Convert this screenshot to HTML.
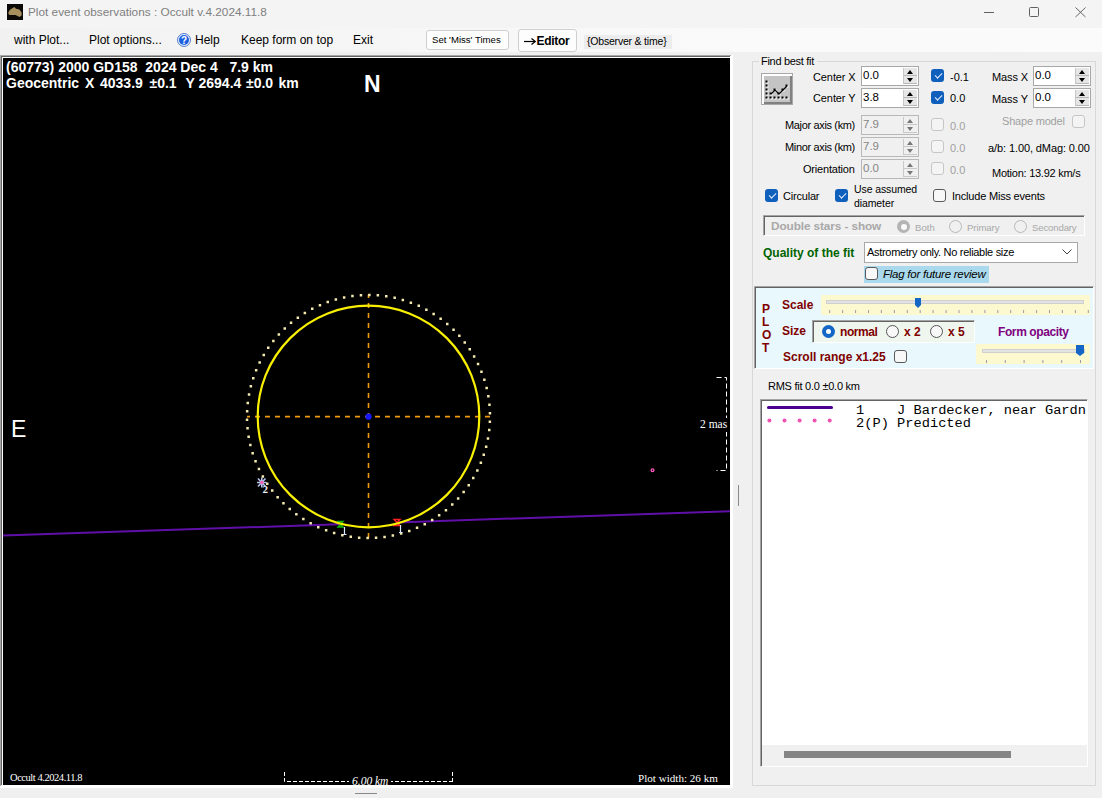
<!DOCTYPE html>
<html><head><meta charset="utf-8">
<style>
*{box-sizing:border-box}
html,body{margin:0;padding:0}
body{width:1102px;height:798px;position:relative;overflow:hidden;background:#f0f0f0;font-family:"Liberation Sans",sans-serif;font-size:11px;color:#000}
.a{position:absolute;white-space:pre;line-height:1}
.wt{color:#fff;font-weight:bold;font-size:14px}
.chk{position:absolute;width:13px;height:13px;border-radius:3px;background:#0f5fbd}
.chk::after{content:"";position:absolute;left:3.5px;top:3.5px;width:5.5px;height:2.5px;border-left:1px solid #e8f0ff;border-bottom:1px solid #e8f0ff;transform:rotate(-45deg)}
.uchk{position:absolute;width:13px;height:13px;border-radius:3px;border:1px solid #5a5a5a;background:#f8f8f8}
.dchk{position:absolute;width:13px;height:13px;border-radius:3px;border:1px solid #c6c6c6;background:#f4f4f4}
.tb{position:absolute;width:58px;height:20px;border:1px solid #a8a8a8;background:#fff}
.tb.dis{background:#f0f0f0;border-color:#b8b8b8}
.tb .t{position:absolute;left:1px;top:2.5px;font-size:11.5px}
.tb.dis .t{color:#858585}
.sp{position:absolute;left:41px;top:1px;width:14px;height:16px}
.sp i{position:absolute;left:0;width:14px;height:7.5px;background:#e6e6e6;border-bottom:1px solid #b8b8b8;border-left:1px solid #c8c8c8}
.sp i:nth-child(1){top:0}
.sp i:nth-child(2){top:8px}
.sp b{position:absolute;left:4px;width:0;height:0;border-left:3.5px solid transparent;border-right:3.5px solid transparent}
.sp b.u{top:2px;border-bottom:4px solid #000}
.sp b.d{top:10px;border-top:4px solid #000}
.dis .sp i{background:#f0f0f0;border-color:#c8c8c8}
.dis .sp b.u{border-bottom-color:#777}
.dis .sp b.d{border-top-color:#777}
.rad{position:absolute;width:13px;height:13px;border-radius:50%;border:1px solid #555;background:#f8f8f8}
.mar{color:#800000;font-weight:bold}
</style></head><body>
<div class="a" style="left:0;top:0;width:1102px;height:28px;background:#f4f4f4"></div>
<div class="a" style="left:0;top:28px;width:1102px;height:24px;background:linear-gradient(to right,#f1f1f1 0%,#f5f5f5 28%,#f9f9f9 60%,#fbfbfb 100%)"></div>
<svg class="a" style="left:7px;top:4px" width="16" height="16"><rect width="16" height="16" fill="#0c0a08"/><path d="M1.3 9.5C1.5 7 3 5.5 5 4.5L7.3 3L9 4.8L12.3 5.5L14.6 8.5L14.6 11.5L12.5 13L8.5 11L2.5 11Z" fill="#a8905e"/></svg>
<div class="a" style="left:28px;top:6.5px;color:#808080;font-size:11.8px">Plot event observations : Occult v.4.2024.11.8</div>
<div class="a" style="left:984px;top:12px;width:10px;height:1px;background:#606060"></div>
<div class="a" style="left:1029px;top:7px;width:10px;height:10px;border:1px solid #606060;border-radius:1.5px"></div>
<svg class="a" style="left:1074.5px;top:7px" width="11" height="11"><path d="M0.5 0.5L10.5 10M10.5 0.5L0.5 10" stroke="#666" stroke-width="1"/></svg>
<div class="a" style="left:14px;top:34px;font-size:12px">with Plot...</div>
<div class="a" style="left:89px;top:34px;font-size:12px">Plot options...</div>
<div class="a" style="left:195px;top:34px;font-size:12px">Help</div>
<div class="a" style="left:241px;top:34px;font-size:12px">Keep form on top</div>
<div class="a" style="left:353px;top:34px;font-size:12px">Exit</div>
<svg class="a" style="left:177px;top:33px" width="14" height="14"><circle cx="7" cy="7" r="6.5" fill="#e4ecfa" stroke="#4a74c8" stroke-width="0.9"/><circle cx="7" cy="7" r="5" fill="#1b5fe0"/><text x="7" y="10.8" font-size="10" font-weight="bold" text-anchor="middle" fill="#fff" font-family="Liberation Sans">?</text></svg>
<div class="a" style="left:426px;top:30px;width:83px;height:20px;border:1px solid #cfcfcf;border-radius:3px;background:#fdfdfd"></div>
<div class="a" style="left:432px;top:35px;font-size:9.6px">Set 'Miss' Times</div>
<div class="a" style="left:518px;top:29px;width:59px;height:23px;border:1px solid #cfcfcf;border-radius:3px;background:#fdfdfd"></div>
<svg class="a" style="left:524px;top:37px" width="13" height="9"><path d="M0 4.5H11" stroke="#000" stroke-width="1.2"/><path d="M7.5 1.5L11.3 4.5L7.5 7.5" fill="none" stroke="#000" stroke-width="1.2"/></svg>
<div class="a" style="left:536.5px;top:34.8px;font-size:12px;font-weight:bold;letter-spacing:-0.3px">Editor</div>
<div class="a" style="left:584px;top:35px;width:88px;height:14px;background:#ececec"></div>
<div class="a" style="left:587px;top:36px;font-size:10.5px;letter-spacing:-0.2px">{Observer &amp; time}</div>
<div class="a" style="left:0;top:55px;width:733px;height:733px;background:#fff"></div>
<div class="a" style="left:0;top:55px;width:731px;height:1px;background:#a8a8a8"></div>
<div class="a" style="left:0;top:55px;width:1px;height:731px;background:#a8a8a8"></div>
<div class="a" style="left:1px;top:56px;width:729px;height:1px;background:#646464"></div>
<div class="a" style="left:1px;top:56px;width:1px;height:729px;background:#646464"></div>
<div class="a" style="left:3px;top:58px;width:727px;height:727px;background:#000"></div>
<svg class="a" style="left:0;top:0" width="1102" height="798" viewBox="0 0 1102 798"><defs><clipPath id="pc"><rect x="3" y="58" width="727" height="727"/></clipPath></defs><g clip-path="url(#pc)"><line x1="3" y1="535.5" x2="339" y2="524.3" stroke="#6010a8" stroke-width="2"/><line x1="397" y1="522.4" x2="730" y2="511.2" stroke="#6010a8" stroke-width="2"/><line x1="247" y1="416.6" x2="491" y2="416.6" stroke="#f09a10" stroke-width="1.6" stroke-dasharray="5 5" stroke-dashoffset="2"/><line x1="368.5" y1="294.5" x2="368.5" y2="538.5" stroke="#f09a10" stroke-width="1.6" stroke-dasharray="5 5" stroke-dashoffset="1.6"/><path d="M338 521.5H343L338 527H343Z" fill="none" stroke="#10b010" stroke-width="1.4"/><path d="M394 519.5H400L394 525.5H400Z" fill="none" stroke="#ff2020" stroke-width="1.4"/><circle cx="368.5" cy="416.5" r="110.8" fill="none" stroke="#f8f000" stroke-width="2.2"/><path d="M366.4 536.7h2.5v2.5h-2.5zM357.9 536.4h2.5v2.5h-2.5zM349.5 535.4h2.5v2.5h-2.5zM341.1 533.9h2.5v2.5h-2.5zM332.9 531.8h2.5v2.5h-2.5zM324.9 529.1h2.5v2.5h-2.5zM317.0 525.9h2.5v2.5h-2.5zM309.4 522.1h2.5v2.5h-2.5zM302.1 517.8h2.5v2.5h-2.5zM295.1 513.0h2.5v2.5h-2.5zM288.5 507.7h2.5v2.5h-2.5zM282.2 502.0h2.5v2.5h-2.5zM276.4 495.9h2.5v2.5h-2.5zM271.0 489.3h2.5v2.5h-2.5zM266.0 482.4h2.5v2.5h-2.5zM261.6 475.2h2.5v2.5h-2.5zM257.7 467.7h2.5v2.5h-2.5zM254.3 459.9h2.5v2.5h-2.5zM251.4 451.9h2.5v2.5h-2.5zM249.1 443.8h2.5v2.5h-2.5zM247.4 435.5h2.5v2.5h-2.5zM246.3 427.1h2.5v2.5h-2.5zM245.8 418.6h2.5v2.5h-2.5zM245.9 410.1h2.5v2.5h-2.5zM246.5 401.7h2.5v2.5h-2.5zM247.8 393.3h2.5v2.5h-2.5zM249.6 385.0h2.5v2.5h-2.5zM252.0 376.9h2.5v2.5h-2.5zM254.9 368.9h2.5v2.5h-2.5zM258.4 361.2h2.5v2.5h-2.5zM262.5 353.7h2.5v2.5h-2.5zM267.0 346.6h2.5v2.5h-2.5zM272.1 339.7h2.5v2.5h-2.5zM277.6 333.3h2.5v2.5h-2.5zM283.5 327.2h2.5v2.5h-2.5zM289.8 321.6h2.5v2.5h-2.5zM296.6 316.4h2.5v2.5h-2.5zM303.6 311.7h2.5v2.5h-2.5zM311.0 307.6h2.5v2.5h-2.5zM318.7 303.9h2.5v2.5h-2.5zM326.5 300.8h2.5v2.5h-2.5zM334.6 298.2h2.5v2.5h-2.5zM342.9 296.2h2.5v2.5h-2.5zM351.2 294.8h2.5v2.5h-2.5zM359.7 294.0h2.5v2.5h-2.5zM368.1 293.8h2.5v2.5h-2.5zM376.6 294.1h2.5v2.5h-2.5zM385.0 295.1h2.5v2.5h-2.5zM393.4 296.6h2.5v2.5h-2.5zM401.6 298.7h2.5v2.5h-2.5zM409.6 301.4h2.5v2.5h-2.5zM417.5 304.6h2.5v2.5h-2.5zM425.1 308.4h2.5v2.5h-2.5zM432.4 312.7h2.5v2.5h-2.5zM439.4 317.5h2.5v2.5h-2.5zM446.0 322.8h2.5v2.5h-2.5zM452.3 328.5h2.5v2.5h-2.5zM458.1 334.6h2.5v2.5h-2.5zM463.5 341.2h2.5v2.5h-2.5zM468.5 348.1h2.5v2.5h-2.5zM472.9 355.3h2.5v2.5h-2.5zM476.8 362.8h2.5v2.5h-2.5zM480.2 370.6h2.5v2.5h-2.5zM483.1 378.6h2.5v2.5h-2.5zM485.4 386.7h2.5v2.5h-2.5zM487.1 395.0h2.5v2.5h-2.5zM488.2 403.4h2.5v2.5h-2.5zM488.7 411.9h2.5v2.5h-2.5zM488.6 420.4h2.5v2.5h-2.5zM488.0 428.8h2.5v2.5h-2.5zM486.7 437.2h2.5v2.5h-2.5zM484.9 445.5h2.5v2.5h-2.5zM482.5 453.6h2.5v2.5h-2.5zM479.6 461.6h2.5v2.5h-2.5zM476.1 469.3h2.5v2.5h-2.5zM472.0 476.8h2.5v2.5h-2.5zM467.5 483.9h2.5v2.5h-2.5zM462.4 490.8h2.5v2.5h-2.5zM456.9 497.2h2.5v2.5h-2.5zM451.0 503.3h2.5v2.5h-2.5zM444.7 508.9h2.5v2.5h-2.5zM437.9 514.1h2.5v2.5h-2.5zM430.9 518.8h2.5v2.5h-2.5zM423.5 522.9h2.5v2.5h-2.5zM415.8 526.6h2.5v2.5h-2.5zM408.0 529.7h2.5v2.5h-2.5zM399.9 532.3h2.5v2.5h-2.5zM391.6 534.3h2.5v2.5h-2.5zM383.3 535.7h2.5v2.5h-2.5zM374.8 536.5h2.5v2.5h-2.5z" fill="#f4eab0"/><circle cx="368.5" cy="416.7" r="3.1" fill="#1818ff"/><path d="M344.5 527V534.5M343 534.5H346.5" stroke="#d8e8ff" stroke-width="1.2"/><path d="M400.5 525V532.5M399 532.5H402.5" stroke="#d8e8ff" stroke-width="1.2"/><path d="M258 478.5L265.5 486.5M265.5 478.5L258 486.5M261.8 477.5V487.5M257 482.5H266.5" stroke="#b8c4f0" stroke-width="1.6"/><circle cx="261.8" cy="482.5" r="1.8" fill="#f060b0"/><text x="262.5" y="493" font-family="Liberation Serif" font-size="11" font-weight="bold" fill="#f0f0ff">2</text><circle cx="652.5" cy="470.3" r="1.4" fill="none" stroke="#ff58c0" stroke-width="1.3"/><path d="M716.5 377.5H726.5V470.5H716.5" fill="none" stroke="#fff" stroke-width="1" stroke-dasharray="5 3"/></g></svg>
<div class="a" style="left:716px;top:418px;width:14px;height:14px;background:#000"></div>
<div class="a" style="left:700px;top:419px;color:#fff;font-family:'Liberation Serif';font-size:11.5px">2 mas</div>
<div class="a wt" style="left:6px;top:60px">(60773) 2000 GD158  2024 Dec 4   7.9 km</div>
<div class="a wt" style="left:6px;top:76px">Geocentric</div>
<div class="a wt" style="left:85px;top:76px">X</div>
<div class="a wt" style="left:100px;top:76px">4033.9</div>
<div class="a wt" style="left:149.5px;top:76px">±0.1</div>
<div class="a wt" style="left:185.5px;top:76px">Y</div>
<div class="a wt" style="left:198.5px;top:76px">2694.4</div>
<div class="a wt" style="left:246px;top:76px">±0.0</div>
<div class="a wt" style="left:278.5px;top:76px">km</div>
<div class="a" style="left:364px;top:73px;color:#fff;font-weight:bold;font-size:23px">N</div>
<div class="a" style="left:11px;top:418px;color:#fff;font-size:23px">E</div>
<div class="a" style="left:10px;top:773px;color:#fff;font-family:'Liberation Serif';font-size:10.5px;letter-spacing:-0.45px">Occult 4.2024.11.8</div>
<div class="a" style="left:638px;top:773px;color:#fff;font-family:'Liberation Serif';font-size:11.1px">Plot width: 26 km</div>
<svg class="a" style="left:0;top:0" width="1102" height="798"><path d="M284.5 772V781.5H453" fill="none" stroke="#fff" stroke-width="1" stroke-dasharray="4 2"/><path d="M452.5 772V781.5" stroke="#fff" stroke-width="1" stroke-dasharray="4 2"/></svg>
<div class="a" style="left:349px;top:776px;width:42px;height:9px;background:#000"></div>
<div class="a" style="left:352px;top:775.5px;color:#fff;font-family:'Liberation Serif';font-style:italic;font-size:11.5px">6.00 km</div>
<div class="a" style="left:355px;top:793px;width:22px;height:1px;background:#8a8a8a"></div>
<div class="a" style="left:738px;top:485px;width:1px;height:21px;background:#8a8a8a"></div>
<div class="a" style="left:752px;top:61px;width:344px;height:725px;border:1px solid #d8d8d8"></div>
<div class="a" style="left:759px;top:55px;width:58px;height:12px;background:#f0f0f0"></div>
<div class="a" style="left:761px;top:56px;font-size:11px;letter-spacing:-0.3px">Find best fit</div>
<svg class="a" style="left:761px;top:73px" width="32" height="32"><rect x="0" y="0" width="32" height="32" fill="#a8a8a8"/><rect x="1" y="1" width="30" height="30" fill="#fff"/><rect x="3" y="3" width="28" height="28" fill="#808080"/><rect x="3" y="3" width="26" height="26" fill="#c4c4c4"/><rect x="5.5" y="8.5" width="2" height="2" fill="#fff"/><rect x="5.5" y="12.5" width="2" height="2" fill="#fff"/><rect x="5.5" y="16.5" width="2" height="2" fill="#fff"/><rect x="5.5" y="20.5" width="2" height="2" fill="#fff"/><rect x="5.5" y="24.5" width="2" height="2" fill="#fff"/><rect x="9.5" y="24.5" width="2" height="2" fill="#fff"/><rect x="13.5" y="24.5" width="2" height="2" fill="#fff"/><rect x="17.5" y="24.5" width="2" height="2" fill="#fff"/><rect x="21.5" y="24.5" width="2" height="2" fill="#fff"/><rect x="25.5" y="24.5" width="2" height="2" fill="#fff"/><rect x="9.5" y="20.5" width="2" height="2" fill="#fff"/><rect x="13.5" y="16.5" width="2" height="2" fill="#fff"/><rect x="17.5" y="20.5" width="2" height="2" fill="#fff"/><rect x="21.5" y="16.5" width="2" height="2" fill="#fff"/><rect x="25.5" y="12.5" width="2" height="2" fill="#fff"/><path d="M10 21L14 17L18 21L22 17L26 13" fill="none" stroke="#000" stroke-width="1.1"/><rect x="4.5" y="7.5" width="2" height="2" fill="#000"/><rect x="4.5" y="11.5" width="2" height="2" fill="#000"/><rect x="4.5" y="15.5" width="2" height="2" fill="#000"/><rect x="4.5" y="19.5" width="2" height="2" fill="#000"/><rect x="4.5" y="23.5" width="2" height="2" fill="#000"/><rect x="8.5" y="23.5" width="2" height="2" fill="#000"/><rect x="12.5" y="23.5" width="2" height="2" fill="#000"/><rect x="16.5" y="23.5" width="2" height="2" fill="#000"/><rect x="20.5" y="23.5" width="2" height="2" fill="#000"/><rect x="24.5" y="23.5" width="2" height="2" fill="#000"/><rect x="8.5" y="19.5" width="2" height="2" fill="#000"/><rect x="12.5" y="15.5" width="2" height="2" fill="#000"/><rect x="16.5" y="19.5" width="2" height="2" fill="#000"/><rect x="20.5" y="15.5" width="2" height="2" fill="#000"/><rect x="24.5" y="11.5" width="2" height="2" fill="#000"/></svg>
<div class="a" style="left:813px;top:72px;letter-spacing:-0.1px">Center X</div>
<div class="a" style="left:813px;top:93px;letter-spacing:-0.1px">Center Y</div>
<div class="tb" style="left:861px;top:66px"><span class="a t">0.0</span><div class="sp"><i></i><i></i><b class="u"></b><b class="d"></b></div></div>
<div class="tb" style="left:861px;top:88px"><span class="a t">3.8</span><div class="sp"><i></i><i></i><b class="u"></b><b class="d"></b></div></div>
<div class="chk" style="left:931px;top:69px"></div>
<div class="chk" style="left:931px;top:91px"></div>
<div class="a" style="left:950px;top:71.5px;font-size:11px">-0.1</div>
<div class="a" style="left:950px;top:93px;font-size:11px">0.0</div>
<div class="a" style="left:992px;top:72px;letter-spacing:-0.1px">Mass X</div>
<div class="a" style="left:992px;top:94px;letter-spacing:-0.1px">Mass Y</div>
<div class="tb" style="left:1033px;top:66px"><span class="a t">0.0</span><div class="sp"><i></i><i></i><b class="u"></b><b class="d"></b></div></div>
<div class="tb" style="left:1033px;top:88px"><span class="a t">0.0</span><div class="sp"><i></i><i></i><b class="u"></b><b class="d"></b></div></div>
<div class="a" style="left:785px;top:120px;letter-spacing:-0.35px">Major axis (km)</div>
<div class="a" style="left:785px;top:142px;letter-spacing:-0.35px">Minor axis (km)</div>
<div class="a" style="left:803px;top:164px;letter-spacing:-0.2px">Orientation</div>
<div class="tb dis" style="left:861px;top:115px"><span class="a t">7.9</span><div class="sp"><i></i><i></i><b class="u"></b><b class="d"></b></div></div>
<div class="tb dis" style="left:861px;top:137px"><span class="a t">7.9</span><div class="sp"><i></i><i></i><b class="u"></b><b class="d"></b></div></div>
<div class="tb dis" style="left:861px;top:159px"><span class="a t">0.0</span><div class="sp"><i></i><i></i><b class="u"></b><b class="d"></b></div></div>
<div class="dchk" style="left:931px;top:118px"></div>
<div class="a" style="left:950px;top:120.5px;font-size:11px;color:#a0a0a0">0.0</div>
<div class="dchk" style="left:931px;top:140px"></div>
<div class="a" style="left:950px;top:142.5px;font-size:11px;color:#a0a0a0">0.0</div>
<div class="dchk" style="left:931px;top:162px"></div>
<div class="a" style="left:950px;top:164.5px;font-size:11px;color:#a0a0a0">0.0</div>
<div class="a" style="left:1002px;top:116px;color:#a0a0a0;letter-spacing:-0.2px">Shape model</div>
<div class="dchk" style="left:1072px;top:115px"></div>
<div class="a" style="left:988px;top:143px;font-size:11px;letter-spacing:-0.1px">a/b: 1.00, dMag: 0.00</div>
<div class="a" style="left:992px;top:168px;font-size:11px;letter-spacing:-0.25px">Motion: 13.92 km/s</div>
<div class="chk" style="left:765px;top:189px"></div>
<div class="a" style="left:783px;top:191px;letter-spacing:-0.2px">Circular</div>
<div class="chk" style="left:835px;top:189px"></div>
<div class="a" style="left:854px;top:184.3px;font-size:10.5px;letter-spacing:-0.1px">Use assumed</div>
<div class="a" style="left:854px;top:197.5px;font-size:10.5px;letter-spacing:-0.1px">diameter</div>
<div class="uchk" style="left:933px;top:189px"></div>
<div class="a" style="left:952px;top:191px;letter-spacing:-0.2px">Include Miss events</div>
<div class="a" style="left:763px;top:215px;width:322px;height:21px;border-top:1px solid #a4a4a4;border-left:1px solid #a4a4a4;border-bottom:1px solid #fff;border-right:1px solid #fff;box-shadow:inset 1px 1px 0 #646464"></div>
<div class="a" style="left:771px;top:220.5px;font-weight:bold;color:#a8a8a8;font-size:11.8px;letter-spacing:-0.1px">Double stars - show</div>
<div class="a" style="left:897px;top:220px;width:13px;height:13px;border-radius:50%;background:#b4b4b4"></div>
<div class="a" style="left:900.5px;top:223.5px;width:6px;height:6px;border-radius:50%;background:#fafafa"></div>
<div class="a" style="left:915px;top:223px;font-size:9.6px;color:#a8a8a8">Both</div>
<div class="rad" style="left:949px;top:220px;border-color:#b8b8b8;background:#f0f0f0"></div>
<div class="a" style="left:967px;top:223px;font-size:9.6px;color:#a8a8a8;letter-spacing:-0.1px">Primary</div>
<div class="rad" style="left:1014px;top:220px;border-color:#b8b8b8;background:#f0f0f0"></div>
<div class="a" style="left:1032px;top:223px;font-size:9.6px;color:#a8a8a8;letter-spacing:-0.15px">Secondary</div>
<div class="a" style="left:763px;top:247px;font-weight:bold;color:#006400;font-size:12px">Quality of the fit</div>
<div class="a" style="left:864px;top:242px;width:214px;height:21px;border:1px solid #a8a8a8;background:#fff"></div>
<div class="a" style="left:867px;top:247px;font-size:11px;letter-spacing:-0.3px">Astrometry only. No reliable size</div>
<svg class="a" style="left:1062px;top:249px" width="10" height="6"><path d="M0.5 0.5L5 5L9.5 0.5" fill="none" stroke="#444" stroke-width="1"/></svg>
<div class="a" style="left:864px;top:266px;width:125px;height:17px;background:#aad8ec"></div>
<div class="uchk" style="left:865px;top:267px"></div>
<div class="a" style="left:883px;top:269px;font-style:italic;font-size:11.5px;letter-spacing:-0.25px">Flag for future review</div>
<div class="a" style="left:754px;top:286px;width:340px;height:83px;background:#e8f8fc;border-top:1px solid #a4a4a4;border-left:1px solid #a4a4a4;border-bottom:1px solid #fff;border-right:1px solid #fff;box-shadow:inset 1px 1px 0 #646464"></div>
<div class="a" style="left:762px;top:303.0px;font-weight:bold;color:#800000;font-size:12px">P</div>
<div class="a" style="left:762px;top:315.9px;font-weight:bold;color:#800000;font-size:12px">L</div>
<div class="a" style="left:762px;top:328.8px;font-weight:bold;color:#800000;font-size:12px">O</div>
<div class="a" style="left:762px;top:341.7px;font-weight:bold;color:#800000;font-size:12px">T</div>
<div class="a" style="left:782px;top:299px;font-weight:bold;color:#800000;font-size:12px">Scale</div>
<div class="a" style="left:782px;top:325px;font-weight:bold;color:#800000;font-size:12px">Size</div>
<div class="a" style="left:783px;top:351px;font-weight:bold;color:#800000;font-size:12px;letter-spacing:0px">Scroll range x1.25</div>
<div class="uchk" style="left:894px;top:350px"></div>
<div class="a" style="left:821px;top:295px;width:269px;height:20px;background:#fcf8d0"></div>
<div class="a" style="left:826px;top:300px;width:258px;height:4px;background:#e2e2e2;border:1px solid #d0d0d0"></div>
<svg class="a" style="left:821px;top:295px" width="269" height="20"><line x1="8.7" y1="15" x2="8.7" y2="18" stroke="#9a9aa8" stroke-width="1"/><line x1="21.6" y1="15" x2="21.6" y2="18" stroke="#9a9aa8" stroke-width="1"/><line x1="34.6" y1="15" x2="34.6" y2="18" stroke="#9a9aa8" stroke-width="1"/><line x1="47.5" y1="15" x2="47.5" y2="18" stroke="#9a9aa8" stroke-width="1"/><line x1="60.4" y1="15" x2="60.4" y2="18" stroke="#9a9aa8" stroke-width="1"/><line x1="73.4" y1="15" x2="73.4" y2="18" stroke="#9a9aa8" stroke-width="1"/><line x1="86.3" y1="15" x2="86.3" y2="18" stroke="#9a9aa8" stroke-width="1"/><line x1="99.2" y1="15" x2="99.2" y2="18" stroke="#9a9aa8" stroke-width="1"/><line x1="112.1" y1="15" x2="112.1" y2="18" stroke="#9a9aa8" stroke-width="1"/><line x1="125.1" y1="15" x2="125.1" y2="18" stroke="#9a9aa8" stroke-width="1"/><line x1="138.0" y1="15" x2="138.0" y2="18" stroke="#9a9aa8" stroke-width="1"/><line x1="150.9" y1="15" x2="150.9" y2="18" stroke="#9a9aa8" stroke-width="1"/><line x1="163.9" y1="15" x2="163.9" y2="18" stroke="#9a9aa8" stroke-width="1"/><line x1="176.8" y1="15" x2="176.8" y2="18" stroke="#9a9aa8" stroke-width="1"/><line x1="189.7" y1="15" x2="189.7" y2="18" stroke="#9a9aa8" stroke-width="1"/><line x1="202.6" y1="15" x2="202.6" y2="18" stroke="#9a9aa8" stroke-width="1"/><line x1="215.6" y1="15" x2="215.6" y2="18" stroke="#9a9aa8" stroke-width="1"/><line x1="228.5" y1="15" x2="228.5" y2="18" stroke="#9a9aa8" stroke-width="1"/><line x1="241.4" y1="15" x2="241.4" y2="18" stroke="#9a9aa8" stroke-width="1"/><line x1="254.4" y1="15" x2="254.4" y2="18" stroke="#9a9aa8" stroke-width="1"/><line x1="267.3" y1="15" x2="267.3" y2="18" stroke="#9a9aa8" stroke-width="1"/><path d="M94 3H100V10L97 13L94 10Z" fill="#1466c6"/></svg>
<div class="a" style="left:812px;top:320px;width:163px;height:23px;background:#eef6ee;border-top:1px solid #a4a4a4;border-left:1px solid #a4a4a4;border-bottom:1px solid #fff;border-right:1px solid #fff;box-shadow:inset 1px 1px 0 #646464"></div>
<div class="a" style="left:822px;top:325px;width:13px;height:13px;border-radius:50%;background:#1466c6"></div>
<div class="a" style="left:826px;top:329px;width:5px;height:5px;border-radius:50%;background:#fff"></div>
<div class="a" style="left:840px;top:326px;font-weight:bold;color:#800000;font-size:12px;letter-spacing:-0.45px">normal</div>
<div class="rad" style="left:886px;top:325px"></div>
<div class="a" style="left:904px;top:326px;font-weight:bold;color:#800000;font-size:12px">x 2</div>
<div class="rad" style="left:930px;top:325px"></div>
<div class="a" style="left:948px;top:326px;font-weight:bold;color:#800000;font-size:12px">x 5</div>
<div class="a" style="left:998px;top:326px;font-weight:bold;color:#800080;font-size:12px;letter-spacing:-0.4px">Form opacity</div>
<div class="a" style="left:976px;top:344px;width:114px;height:20px;background:#fcf8d0"></div>
<div class="a" style="left:982px;top:349px;width:103px;height:4px;background:#e2e2e2;border:1px solid #d0d0d0"></div>
<svg class="a" style="left:976px;top:344px" width="114" height="20"><line x1="10.5" y1="16" x2="10.5" y2="19" stroke="#9a9aa8" stroke-width="1"/><line x1="29.3" y1="16" x2="29.3" y2="19" stroke="#9a9aa8" stroke-width="1"/><line x1="48.1" y1="16" x2="48.1" y2="19" stroke="#9a9aa8" stroke-width="1"/><line x1="66.9" y1="16" x2="66.9" y2="19" stroke="#9a9aa8" stroke-width="1"/><line x1="85.7" y1="16" x2="85.7" y2="19" stroke="#9a9aa8" stroke-width="1"/><line x1="104.5" y1="16" x2="104.5" y2="19" stroke="#9a9aa8" stroke-width="1"/><path d="M100 1H108V9L104 12L100 9Z" fill="#1466c6"/></svg>
<div class="a" style="left:768px;top:381px;font-size:11px;letter-spacing:-0.25px">RMS fit 0.0 ±0.0 km</div>
<div class="a" style="left:760px;top:399px;width:328px;height:368px;background:#fff;border-top:1px solid #a4a4a4;border-left:1px solid #a4a4a4;border-bottom:1px solid #fff;border-right:1px solid #fff;box-shadow:inset 1px 1px 0 #646464"></div>
<div class="a" style="left:762px;top:745px;width:325px;height:21px;background:#f0f0f0"></div>
<div class="a" style="left:784px;top:751px;width:227px;height:7px;background:#858585"></div>
<div class="a" style="left:767px;top:406px;width:66px;height:3.4px;border-radius:1.7px;background:#4a0090"></div>
<svg class="a" style="left:765px;top:418px" width="70" height="6"><circle cx="4.4" cy="2.5" r="2" fill="#f050b0"/><circle cx="19.5" cy="2.5" r="2" fill="#f050b0"/><circle cx="34.6" cy="2.5" r="2" fill="#f050b0"/><circle cx="49.6" cy="2.5" r="2" fill="#f050b0"/><circle cx="64.7" cy="2.5" r="2" fill="#f050b0"/></svg>
<div class="a" style="left:856px;top:403.5px;font-family:'Liberation Mono';font-size:13.7px">1    J Bardecker, near Gardn</div>
<div class="a" style="left:856px;top:416.5px;font-family:'Liberation Mono';font-size:13.7px">2(P) Predicted</div>
</body></html>
